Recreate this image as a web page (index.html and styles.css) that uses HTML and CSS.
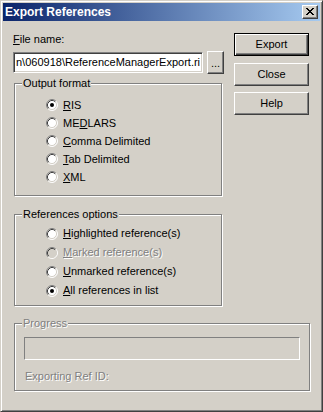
FILE: index.html
```html
<!DOCTYPE html>
<html>
<head>
<meta charset="utf-8">
<link rel="stylesheet" href="styles.css">
</head>
<body>
<div class="window">
  <div class="titlebar">
    <span class="title">Export References</span>
    <span class="closebtn">
      <svg width="8" height="7" viewBox="0 0 8 7" shape-rendering="crispEdges"><path fill="#000" d="M0 0h2v1h-2z M6 0h2v1h-2z M1 1h2v1h-2z M5 1h2v1h-2z M2 2h4v1h-4z M3 3h2v1h-2z M2 4h4v1h-4z M1 5h2v1h-2z M5 5h2v1h-2z M0 6h2v1h-2z M6 6h2v1h-2z"/></svg>
    </span>
  </div>
  <div class="main">
    <div class="left">
      <div class="label"><u>F</u>ile name:</div>
      <div class="filerow">
        <div class="field"><span class="fieldtext">n\060918\ReferenceManagerExport.ri</span></div>
        <div class="btn small">...</div>
      </div>
      <div class="group g1">
        <span class="legend">Output format</span>
        <div class="radio"><svg class="rb" width="12" height="12" viewBox="0 0 12 12"><circle cx="6" cy="6" r="5" fill="#fff"/><path d="M2.11 9.89A5.5 5.5 0 0 1 9.89 2.11" fill="none" stroke="#808080"/><path d="M9.89 2.11A5.5 5.5 0 0 1 2.11 9.89" fill="none" stroke="#fff"/><path d="M2.82 9.18A4.5 4.5 0 0 1 9.18 2.82" fill="none" stroke="#404040"/><path d="M9.18 2.82A4.5 4.5 0 0 1 2.82 9.18" fill="none" stroke="#D4D0C8"/><circle cx="6" cy="6" r="2" fill="#000"/></svg><span><u>R</u>IS</span></div>
        <div class="radio"><svg class="rb" width="12" height="12" viewBox="0 0 12 12"><circle cx="6" cy="6" r="5" fill="#fff"/><path d="M2.11 9.89A5.5 5.5 0 0 1 9.89 2.11" fill="none" stroke="#808080"/><path d="M9.89 2.11A5.5 5.5 0 0 1 2.11 9.89" fill="none" stroke="#fff"/><path d="M2.82 9.18A4.5 4.5 0 0 1 9.18 2.82" fill="none" stroke="#404040"/><path d="M9.18 2.82A4.5 4.5 0 0 1 2.82 9.18" fill="none" stroke="#D4D0C8"/></svg><span>ME<u>D</u>LARS</span></div>
        <div class="radio"><svg class="rb" width="12" height="12" viewBox="0 0 12 12"><circle cx="6" cy="6" r="5" fill="#fff"/><path d="M2.11 9.89A5.5 5.5 0 0 1 9.89 2.11" fill="none" stroke="#808080"/><path d="M9.89 2.11A5.5 5.5 0 0 1 2.11 9.89" fill="none" stroke="#fff"/><path d="M2.82 9.18A4.5 4.5 0 0 1 9.18 2.82" fill="none" stroke="#404040"/><path d="M9.18 2.82A4.5 4.5 0 0 1 2.82 9.18" fill="none" stroke="#D4D0C8"/></svg><span><u>C</u>omma Delimited</span></div>
        <div class="radio"><svg class="rb" width="12" height="12" viewBox="0 0 12 12"><circle cx="6" cy="6" r="5" fill="#fff"/><path d="M2.11 9.89A5.5 5.5 0 0 1 9.89 2.11" fill="none" stroke="#808080"/><path d="M9.89 2.11A5.5 5.5 0 0 1 2.11 9.89" fill="none" stroke="#fff"/><path d="M2.82 9.18A4.5 4.5 0 0 1 9.18 2.82" fill="none" stroke="#404040"/><path d="M9.18 2.82A4.5 4.5 0 0 1 2.82 9.18" fill="none" stroke="#D4D0C8"/></svg><span><u>T</u>ab Delimited</span></div>
        <div class="radio"><svg class="rb" width="12" height="12" viewBox="0 0 12 12"><circle cx="6" cy="6" r="5" fill="#fff"/><path d="M2.11 9.89A5.5 5.5 0 0 1 9.89 2.11" fill="none" stroke="#808080"/><path d="M9.89 2.11A5.5 5.5 0 0 1 2.11 9.89" fill="none" stroke="#fff"/><path d="M2.82 9.18A4.5 4.5 0 0 1 9.18 2.82" fill="none" stroke="#404040"/><path d="M9.18 2.82A4.5 4.5 0 0 1 2.82 9.18" fill="none" stroke="#D4D0C8"/></svg><span><u>X</u>ML</span></div>
      </div>
      <div class="group g2">
        <span class="legend">References options</span>
        <div class="radio"><svg class="rb" width="12" height="12" viewBox="0 0 12 12"><circle cx="6" cy="6" r="5" fill="#fff"/><path d="M2.11 9.89A5.5 5.5 0 0 1 9.89 2.11" fill="none" stroke="#808080"/><path d="M9.89 2.11A5.5 5.5 0 0 1 2.11 9.89" fill="none" stroke="#fff"/><path d="M2.82 9.18A4.5 4.5 0 0 1 9.18 2.82" fill="none" stroke="#404040"/><path d="M9.18 2.82A4.5 4.5 0 0 1 2.82 9.18" fill="none" stroke="#D4D0C8"/></svg><span><u>H</u>ighlighted reference(s)</span></div>
        <div class="radio disabled"><svg class="rb" width="12" height="12" viewBox="0 0 12 12"><circle cx="6" cy="6" r="5" fill="#D4D0C8"/><path d="M2.11 9.89A5.5 5.5 0 0 1 9.89 2.11" fill="none" stroke="#808080"/><path d="M9.89 2.11A5.5 5.5 0 0 1 2.11 9.89" fill="none" stroke="#fff"/><path d="M2.82 9.18A4.5 4.5 0 0 1 9.18 2.82" fill="none" stroke="#404040"/><path d="M9.18 2.82A4.5 4.5 0 0 1 2.82 9.18" fill="none" stroke="#D4D0C8"/></svg><span><u>M</u>arked reference(s)</span></div>
        <div class="radio"><svg class="rb" width="12" height="12" viewBox="0 0 12 12"><circle cx="6" cy="6" r="5" fill="#fff"/><path d="M2.11 9.89A5.5 5.5 0 0 1 9.89 2.11" fill="none" stroke="#808080"/><path d="M9.89 2.11A5.5 5.5 0 0 1 2.11 9.89" fill="none" stroke="#fff"/><path d="M2.82 9.18A4.5 4.5 0 0 1 9.18 2.82" fill="none" stroke="#404040"/><path d="M9.18 2.82A4.5 4.5 0 0 1 2.82 9.18" fill="none" stroke="#D4D0C8"/></svg><span><u>U</u>nmarked reference(s)</span></div>
        <div class="radio"><svg class="rb" width="12" height="12" viewBox="0 0 12 12"><circle cx="6" cy="6" r="5" fill="#fff"/><path d="M2.11 9.89A5.5 5.5 0 0 1 9.89 2.11" fill="none" stroke="#808080"/><path d="M9.89 2.11A5.5 5.5 0 0 1 2.11 9.89" fill="none" stroke="#fff"/><path d="M2.82 9.18A4.5 4.5 0 0 1 9.18 2.82" fill="none" stroke="#404040"/><path d="M9.18 2.82A4.5 4.5 0 0 1 2.82 9.18" fill="none" stroke="#D4D0C8"/><circle cx="6" cy="6" r="2" fill="#000"/></svg><span><u>A</u>ll references in list</span></div>
      </div>
    </div>
    <div class="right">
      <div class="btn big default"><span>Export</span></div>
      <div class="btn big">Close</div>
      <div class="btn big">Help</div>
    </div>
  </div>
  <div class="group g3">
    <span class="legend disabled-text">Progress</span>
    <div class="progress"></div>
    <div class="status disabled-text">Exporting Ref ID:</div>
  </div>
</div>
</body>
</html>
```
FILE: styles.css
```css
* { box-sizing: border-box; }
html, body { margin: 0; padding: 0; background: #D4D0C8; }
body {
  font-family: "Liberation Sans", Arial, sans-serif;
  font-size: 11px;
  color: #000;
}
.window {
  width: 323px;
  height: 412px;
  background: #D4D0C8;
  border: 1px solid;
  border-color: #D4D0C8 #404040 #404040 #D4D0C8;
  box-shadow: inset 1px 1px 0 #fff, inset -1px -1px 0 #808080;
  padding: 2px;
}
.titlebar {
  height: 18px;
  background: linear-gradient(to right, #0A246A, #A6CAF0);
  display: flex;
  align-items: center;
  justify-content: space-between;
  padding-left: 2px;
  padding-right: 2px;
}
.title {
  color: #fff;
  font-weight: bold;
  font-size: 12px;
  line-height: 14px;
}
.closebtn {
  width: 16px;
  height: 14px;
  background: #D4D0C8;
  border: 1px solid;
  border-color: #fff #404040 #404040 #fff;
  box-shadow: inset -1px -1px 0 #808080;
  display: flex;
  align-items: flex-start;
  justify-content: flex-start;
  padding: 2px 0 0 3px;
}
.closebtn svg { display: block; }
.main {
  display: flex;
  padding: 12px 0 0 10px;
}
.left { width: 211px; }
.label { line-height: 13px; height: 13px; margin-bottom: 6px; }
.filerow {
  display: flex;
  align-items: center;
  gap: 4px;
  height: 21px;
}
.field {
  width: 190px;
  height: 21px;
  background: #fff;
  border: 1px solid;
  border-color: #808080 #fff #fff #808080;
  box-shadow: inset 1px 1px 0 #404040, inset -1px -1px 0 #D4D0C8;
  overflow: hidden;
  white-space: nowrap;
  padding: 3px 0 0 2px;
  line-height: 13px;
}
.btn {
  background: #D4D0C8;
  border: 1px solid;
  border-color: #fff #404040 #404040 #fff;
  box-shadow: inset -1px -1px 0 #808080;
  display: flex;
  align-items: center;
  justify-content: center;
  line-height: 13px;
}
.btn.small {
  width: 17px;
  height: 23px;
  padding-top: 1px;
}
.right {
  margin-left: 10px;
  display: flex;
  flex-direction: column;
}
.btn.big {
  width: 75px;
  height: 23px;
  margin-bottom: 6px;
}
.btn.big.default {
  border-color: #000;
  box-shadow: inset 1px 1px 0 #fff, inset -1px -1px 0 #404040, inset -2px -2px 0 #808080;
  margin-bottom: 7px;
}
.group {
  position: relative;
  border: 1px solid #808080;
  box-shadow: inset 1px 1px 0 #fff, 1px 1px 0 #fff;
}
.legend {
  position: absolute;
  top: -7px;
  left: 7px;
  background: #D4D0C8;
  padding: 0 1px;
  line-height: 13px;
}
.g1 {
  margin: 10px 0 0 1px;
  width: 208px;
  height: 113px;
  padding: 12px 0 0 31px;
}
.g2 {
  margin: 18px 0 0 1px;
  width: 208px;
  height: 92px;
  padding: 9px 0 0 31px;
}
.radio {
  display: flex;
  align-items: center;
  height: 18px;
  line-height: 13px;
}
.g2 .radio { height: 19px; }
.rb { display: block; margin-right: 5px; flex: none; }
.radio.disabled span, .disabled-text {
  color: #808080;
  text-shadow: 1px 1px 0 #fff;
}
.g3 {
  margin: 17px 0 0 11px;
  width: 296px;
  height: 68px;
  padding: 13px 0 0 9px;
}
.progress {
  width: 276px;
  height: 23px;
  border: 1px solid;
  border-color: #808080 #fff #fff #808080;
}
.status {
  margin-top: 10px;
  line-height: 13px;
  padding-left: 1px;
}
```
